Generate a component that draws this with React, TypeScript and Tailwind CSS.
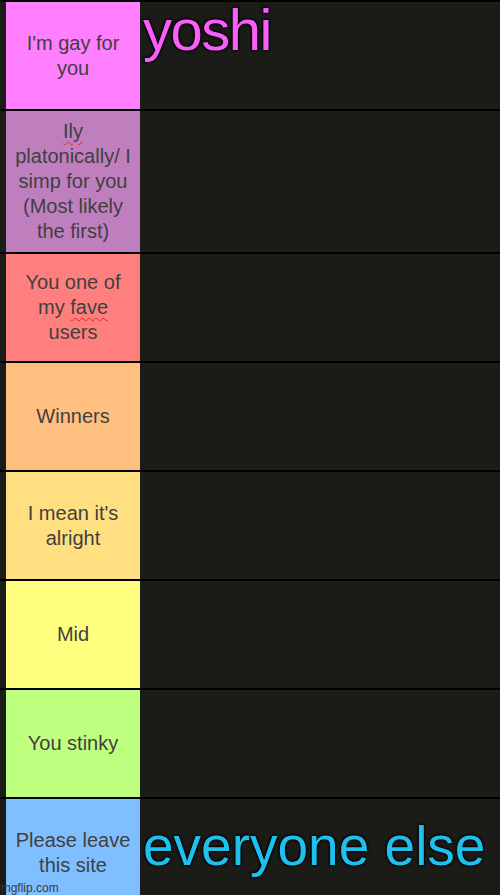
import React from "react";

const wavy = "underline decoration-wavy decoration-[#e8262a] decoration-1 underline-offset-[3px]";
const label = "ml-[6px] w-[134px] shrink-0 flex items-center justify-center px-1.5 text-center text-[20px] leading-[25px] text-[#3f3f3f]";

export default function App() {
  return (
    <div
      className="relative w-[500px] h-[895px] overflow-hidden bg-[#1b1b18] border-t-2 border-black"
      style={{ fontFamily: '"Liberation Sans", Arial, sans-serif' }}
    >
      <div className="flex h-[107px]">
        <div className={`${label} bg-[#ff7fff]`}>I'm gay for you</div>
        <div className="flex-1 pl-[3px]">
          <div className="text-[58px] leading-[56px] tracking-[-1.5px] text-[#fa5efa] [text-shadow:0_0_3px_#000,0_0_3px_#000,0_0_2px_#000]">
            yoshi
          </div>
        </div>
      </div>
      <div className="flex h-[143px] border-t-2 border-black">
        <div className={`${label} bg-[#bf7fbf]`}>
          <span>
            <span className={wavy}>Ily</span> platonically/ I simp for you (Most likely the first)
          </span>
        </div>
        <div className="flex-1" />
      </div>
      <div className="flex h-[109px] border-t-2 border-black">
        <div className={`${label} bg-[#ff7f7f]`}>
          <span>
            You one of my <span className={wavy}>fave</span> users
          </span>
        </div>
        <div className="flex-1" />
      </div>
      <div className="flex h-[109px] border-t-2 border-black">
        <div className={`${label} bg-[#ffbf7f]`}>Winners</div>
        <div className="flex-1" />
      </div>
      <div className="flex h-[109px] border-t-2 border-black">
        <div className={`${label} bg-[#ffdf7f]`}>I mean it's alright</div>
        <div className="flex-1" />
      </div>
      <div className="flex h-[109px] border-t-2 border-black">
        <div className={`${label} bg-[#ffff7f]`}>Mid</div>
        <div className="flex-1" />
      </div>
      <div className="flex h-[109px] border-t-2 border-black">
        <div className={`${label} bg-[#bfff7f]`}>You stinky</div>
        <div className="flex-1" />
      </div>
      <div className="flex h-[109px] border-t-2 border-black">
        <div className={`${label} bg-[#7fbfff]`}>Please leave this site</div>
        <div className="flex-1 pl-[3px] pt-[20px]">
          <div className="text-[55px] leading-none text-[#20c0ee] [text-shadow:0_0_3px_#000,0_0_3px_#000,0_0_2px_#000]">
            everyone else
          </div>
        </div>
      </div>
      <div className="absolute left-[-2px] bottom-[1px] text-[12px] leading-none text-[#3a3a3a]">
        imgflip.com
      </div>
    </div>
  );
}
